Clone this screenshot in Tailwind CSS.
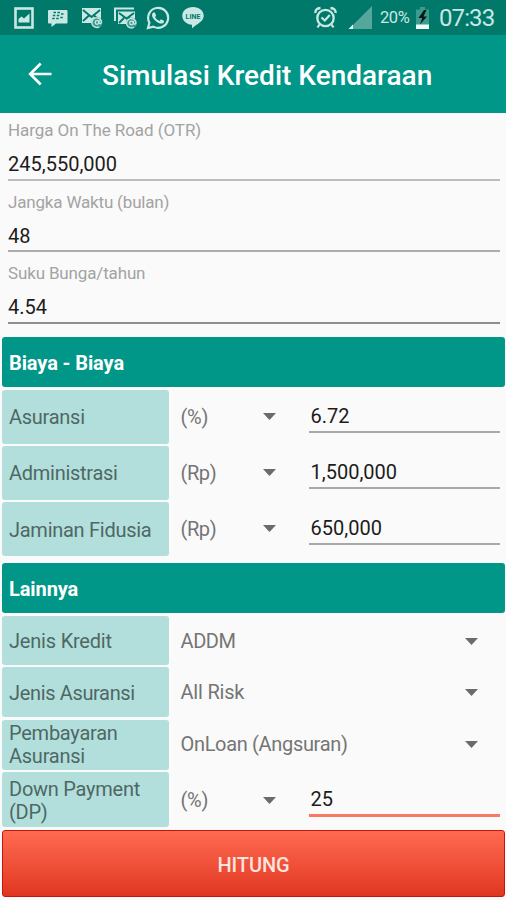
<!DOCTYPE html>
<html lang="id">
<head>
  <meta charset="UTF-8">
  <meta name="viewport" content="width=device-width, initial-scale=1">
  <title>Simulasi Kredit Kendaraan</title>
  <script src="https://cdn.jsdelivr.net/npm/@tailwindcss/browser@4"></script>
</head>
<body class="h-[900px] overflow-hidden bg-[#fafafa] font-[Roboto,sans-serif] text-xl leading-6 text-[#666]">

  <!-- status bar -->
  <div class="flex h-[35px] items-center justify-between bg-[#00796b] pl-3 pr-[11px] text-[#c9e8e4]">
    <div class="flex items-center">
      <svg class="ml-[2px] h-[22px] w-5" viewBox="0 0 20 22" fill="none">
        <rect x="1.5" y="1.5" width="17" height="19" stroke="currentColor" stroke-width="2.6"/>
        <path d="M4.500 15.500V12l3-2.500 2.500 2 5.500-5v9z" fill="currentColor"/>
      </svg>
      <svg class="ml-[13px] h-5 w-[21px]" viewBox="0 0 21 20">
        <path d="M2 2h17.500q1 0 1 1v11.500q0 1-1 1H9L4.500 19v-3.500H2q-1 0-1-1V3q0-1 1-1z" fill="currentColor"/>
        <path d="M6.500 4.500h2.500M10.500 4.500h2.500M5.800 7.500h2.500M9.800 7.500h2.500M14 6h2.500M5.200 10.500h2.500M9.200 10.500h2.500M13.300 9.500h2.500" stroke="#00796b" stroke-width="1.700"/>
      </svg>
      <svg class="ml-[13px] h-[22px] w-[22px]" viewBox="0 0 22 22" fill="none">
        <path d="M1 1h19v15H1z" fill="currentColor"/>
        <path d="M2 3l8.500 7L19 3M2 14l6-5.500M18 13l-5-4.500" stroke="#00796b" stroke-width="1.900"/>
        <circle cx="16" cy="15.500" r="5.500" fill="#3c9c90"/>
        <circle cx="16" cy="15.500" r="1.800" stroke="currentColor" stroke-width="1.300"/>
        <path d="M18 13.300v2.800q1.500 1.500 2.500-.6a4.800 4.800 0 1 0-2.200 4.200" stroke="currentColor" stroke-width="1.300"/>
      </svg>
      <svg class="ml-[10px] h-[22px] w-6" viewBox="0 0 24 22" fill="none">
        <path d="M2 14V1.500h19" stroke="currentColor" stroke-width="2"/>
        <path d="M5 4.500h17V17H5z" fill="currentColor"/>
        <path d="M6 6l7.500 5.500L21 6M6 16l5-5M19 14l-4-4" stroke="#00796b" stroke-width="1.900"/>
        <circle cx="18.500" cy="16" r="5.500" fill="#3c9c90"/>
        <circle cx="18.500" cy="16" r="1.800" stroke="currentColor" stroke-width="1.300"/>
        <path d="M20.500 13.800v2.800q1.500 1.500 2.500-.6a4.700 4.700 0 1 0-2.200 4.200" stroke="currentColor" stroke-width="1.300"/>
      </svg>
      <svg class="ml-[9px] h-6 w-6" viewBox="0 0 24 24">
        <path fill="currentColor" d="M17.472 14.382c-.297-.149-1.758-.867-2.030-.967-.273-.099-.471-.148-.670.150-.197.297-.767.966-.940 1.164-.173.199-.347.223-.644.075-.297-.150-1.255-.463-2.390-1.475-.883-.788-1.480-1.761-1.653-2.059-.173-.297-.018-.458.130-.606.134-.133.298-.347.446-.520.149-.174.198-.298.298-.497.099-.198.050-.371-.025-.520-.075-.149-.669-1.612-.916-2.207-.242-.579-.487-.500-.669-.510-.173-.008-.371-.010-.570-.010-.198 0-.520.074-.792.372-.272.297-1.040 1.016-1.040 2.479 0 1.462 1.065 2.875 1.213 3.074.149.198 2.096 3.200 5.077 4.487.709.306 1.262.489 1.694.625.712.227 1.360.195 1.871.118.571-.085 1.758-.719 2.006-1.413.248-.694.248-1.289.173-1.413-.074-.124-.272-.198-.570-.347z"/>
        <path d="M2 22l1.400-5.300A10 10 0 1 1 7.300 20.600z" fill="none" stroke="currentColor" stroke-width="2.200"/>
      </svg>
      <svg class="ml-[11px] h-6 w-6" viewBox="0 0 24 24">
        <path d="M12 1c6.200 0 10.700 3.900 10.700 8.700 0 4.500-4.500 7.300-7.200 9.100L11 22.300v-3.500C5.500 18.400 1.300 14.500 1.300 9.700 1.300 4.900 5.800 1 12 1z" fill="currentColor"/>
        <text x="12" y="12.500" text-anchor="middle" textLength="15" class="fill-[#00796b] text-[7px] font-bold">LINE</text>
      </svg>
    </div>
    <div class="flex items-center">
      <svg class="h-6 w-[23px]" viewBox="0 0 23 24" fill="none" stroke="currentColor">
        <circle cx="11.500" cy="12" r="8.200" stroke-width="2.300"/>
        <path d="M1.500 7Q1 2.500 6.500 2M21.500 7Q22 2.500 16.500 2" stroke-width="2.400"/>
        <path d="M7.500 11.500l3.300 3 5-5.500" stroke-width="2.200"/>
        <path d="M5.500 18.500l-2 3M17.500 18.500l2 3" stroke-width="2.200"/>
      </svg>
      <svg class="ml-[11px] h-[23px] w-6" viewBox="0 0 24 23">
        <path d="M24 0v23H1z" fill="#55a79d"/>
        <path d="M5 18.500V23H.500z" fill="#e6f5f3"/>
      </svg>
      <span class="ml-2 w-[31px] whitespace-nowrap text-[16.500px] tracking-[-0.4px]">20%</span>
      <svg class="ml-[4px] h-[22px] w-[15px]" viewBox="0 0 15 22">
        <path d="M1 2.500h4V0h5v2.500h4V22H1z" fill="#3a9c8f"/>
        <path d="M1 17.500h13V22H1z" fill="#effaf8"/>
        <path d="M9 3L3.500 11h3.800L5 17.500l7-8H8.500L11.500 3z" fill="#081a18"/>
      </svg>
      <span class="ml-[9px] w-[56px] whitespace-nowrap text-[24px] tracking-[-0.9px]">07:33</span>
    </div>
  </div>

  <!-- app bar -->
  <header class="flex h-[78px] items-center bg-[#009688] pl-7 text-white">
    <svg class="h-6 w-6" viewBox="0 0 24 24" fill="none" stroke="currentColor" stroke-width="2.700">
      <path d="M23.500 12H3M12.700 1.500L2.200 12l10.500 10.500"/>
    </svg>
    <h1 class="ml-[50px] whitespace-nowrap pt-1 text-[28px] font-medium">Simulasi Kredit Kendaraan</h1>
  </header>

  <main>
    <!-- loan fields -->
    <section class="h-56 pl-2 pr-[6px] pt-[5px]">
      <div class="h-[71.5px]">
        <p class="text-[17px] tracking-[-0.07px] text-[#a3a3a3]">Harga On The Road (OTR)</p>
        <p class="mt-[5px] border-b-2 border-[#bcbcbc] pb-[3px] pt-[5px] text-[#1c1c1c]">245,550,000</p>
      </div>
      <div class="h-[71.5px]">
        <p class="text-[17px] tracking-[-0.18px] text-[#a3a3a3]">Jangka Waktu (bulan)</p>
        <p class="mt-[5px] border-b-2 border-[#adadad] pb-[2.500px] pt-[5px] text-[#1c1c1c]">48</p>
      </div>
      <div class="h-[71.5px]">
        <p class="text-[17px] tracking-[-0.15px] text-[#a3a3a3]">Suku Bunga/tahun</p>
        <p class="mt-[5px] border-b-2 border-[#8e8e8e] pb-[2.500px] pt-[5px] text-[#1c1c1c]">4.54</p>
      </div>
    </section>

    <!-- fees -->
    <section class="pl-[2px] pr-px">
      <h2 class="flex h-[50px] items-center rounded-[3px] bg-[#009688] px-[7px] pt-[2px] font-bold tracking-[-0.1px] text-white">Biaya - Biaya</h2>
      <div class="mt-[2.5px] grid grid-cols-[167px_140px_190.5px] grid-rows-[54px_54px_54px] gap-y-[2px] text-[#1c1c1c]">
        <div class="flex items-center rounded-[3px] bg-[#b2dfdb] px-[7px] pt-px tracking-[-0.27px] text-[#4e6865]">Asuransi</div>
        <div class="flex items-center justify-between pl-[11.5px] pr-[33px] tracking-[-0.3px] text-[#757575]">(%)<svg class="h-[7px] w-[13px]" viewBox="0 0 13 7"><path d="M0 0h13L6.500 7z" fill="#6b6b6b"/></svg></div>
        <div class="mt-[11px] h-8 self-start border-b-2 border-[#a8a8a8] pl-[1.500px] pt-[3px]">6.72</div>

        <div class="flex items-center rounded-[3px] bg-[#b2dfdb] px-[7px] pt-px tracking-[-0.27px] text-[#4e6865]">Administrasi</div>
        <div class="flex items-center justify-between pl-[11.5px] pr-[33px] tracking-[-0.4px] text-[#757575]">(Rp)<svg class="h-[7px] w-[13px]" viewBox="0 0 13 7"><path d="M0 0h13L6.500 7z" fill="#6b6b6b"/></svg></div>
        <div class="mt-[11px] h-8 self-start border-b-2 border-[#a8a8a8] pl-[1.500px] pt-[3px]">1,500,000</div>

        <div class="flex items-center rounded-[3px] bg-[#b2dfdb] px-[7px] pt-[3px] tracking-[-0.27px] text-[#4e6865]">Jaminan Fidusia</div>
        <div class="flex items-center justify-between pl-[11.5px] pr-[33px] tracking-[-0.4px] text-[#757575]">(Rp)<svg class="h-[7px] w-[13px]" viewBox="0 0 13 7"><path d="M0 0h13L6.500 7z" fill="#6b6b6b"/></svg></div>
        <div class="mt-[11px] h-8 self-start border-b-2 border-[#a8a8a8] pl-[1.500px] pt-[3px]">650,000</div>
      </div>
    </section>

    <!-- others -->
    <section class="mt-[7.5px] pl-[2px] pr-px">
      <h2 class="flex h-[50px] items-center rounded-[3px] bg-[#009688] px-[7px] pt-[2px] font-bold tracking-[-0.1px] text-white">Lainnya</h2>
      <div class="mt-[3px] grid grid-cols-[167px_140px_190.5px] grid-rows-[49px_50px_50px_55px] gap-y-[2.3px] leading-[23px]">
        <div class="flex items-center rounded-[3px] bg-[#b2dfdb] px-[7px] pt-px tracking-[-0.2px] text-[#4e6865]">Jenis Kredit</div>
        <div class="col-span-2 flex items-center justify-between pl-[11.5px] pr-[21.5px] pt-px tracking-[-0.4px] text-[#757575]">ADDM<svg class="h-[7px] w-[13px]" viewBox="0 0 13 7"><path d="M0 0h13L6.500 7z" fill="#6b6b6b"/></svg></div>

        <div class="flex items-center rounded-[3px] bg-[#b2dfdb] px-[7px] pt-[3px] tracking-[-0.35px] text-[#4e6865]">Jenis Asuransi</div>
        <div class="col-span-2 flex items-center justify-between pl-[11.5px] pr-[21.5px] tracking-[-0.2px] text-[#757575]">All Risk<svg class="h-[7px] w-[13px]" viewBox="0 0 13 7"><path d="M0 0h13L6.500 7z" fill="#6b6b6b"/></svg></div>

        <div class="flex items-center rounded-[3px] bg-[#b2dfdb] px-[7px] pt-px tracking-[-0.25px] text-[#4e6865]">Pembayaran Asuransi</div>
        <div class="col-span-2 flex items-center justify-between pl-[11.5px] pr-[21.5px] tracking-[-0.33px] text-[#757575]">OnLoan (Angsuran)<svg class="h-[7px] w-[13px]" viewBox="0 0 13 7"><path d="M0 0h13L6.500 7z" fill="#6b6b6b"/></svg></div>

        <div class="flex items-center rounded-[3px] bg-[#b2dfdb] px-[7px] pt-1 tracking-[-0.25px] text-[#4e6865]">Down Payment (DP)</div>
        <div class="flex items-center justify-between pl-[11.5px] pr-[33px] pt-[2px] tracking-[-0.3px] text-[#757575]">(%)<svg class="h-[7px] w-[13px]" viewBox="0 0 13 7"><path d="M0 0h13L6.500 7z" fill="#6b6b6b"/></svg></div>
        <div class="mt-3 h-[33.5px] self-start border-b-3 border-[#f77966] pl-[1.500px] pt-[4.500px] text-[#1c1c1c]">25</div>
      </div>
    </section>

    <button class="ml-[2px] mt-[3px] flex h-[67px] w-[503px] items-center justify-center rounded-[3px] border border-[#c5160b] bg-linear-to-b from-[#ff6a50] to-[#e03520] pt-1 font-medium tracking-[-0.1px] text-[#ffe3df]">HITUNG</button>
  </main>
</body>
</html>
